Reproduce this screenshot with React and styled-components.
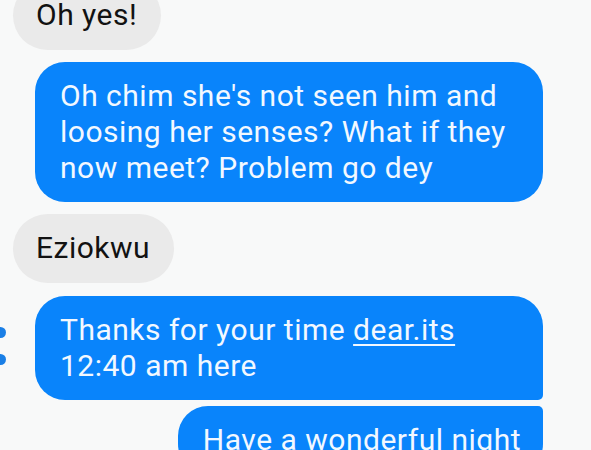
import React from 'react'
import styled, { createGlobalStyle } from 'styled-components'

const GlobalStyle = createGlobalStyle`
  html, body {
    margin: 0;
    padding: 0;
    background: #f8f9f9;
    font-family: Roboto, "Noto Sans", "Liberation Sans", sans-serif;
  }
`

function App() {
  return (
    <>
      <GlobalStyle />
      <Screen>
        <Thread>
          <Row>
            <Bubble>Oh yes!</Bubble>
          </Row>
          <Row $mine>
            <Bubble $mine $wide>
              Oh chim she's not seen him and<br />
              loosing her senses? What if they<br />
              now meet? Problem go dey
            </Bubble>
          </Row>
          <Row>
            <Bubble>Eziokwu</Bubble>
          </Row>
          <Group>
            <Row $mine>
              <Dots>
                <Dot />
                <Dot />
              </Dots>
              <Bubble $mine $wide $corners="30px 30px 5px 30px">
                Thanks for your time <Link>dear.its</Link><br />
                12:40 am here
              </Bubble>
            </Row>
            <Row $mine>
              <Bubble $mine $corners="30px 5px 30px 30px">
                Have a wonderful night
              </Bubble>
            </Row>
          </Group>
        </Thread>
      </Screen>
    </>
  )
}

const Screen = styled.div`
  height: 450px;
  overflow: hidden;
`

const Thread = styled.div`
  display: flex;
  flex-direction: column;
  gap: 12px;
  margin-top: -19px;
  padding: 0 48px 0 13px;
`

const Group = styled.div`
  display: flex;
  flex-direction: column;
  gap: 6px;
  margin-top: 1px;
`

const Row = styled.div`
  position: relative;
  display: flex;
  justify-content: ${p => (p.$mine ? 'flex-end' : 'flex-start')};
`

const Bubble = styled.div`
  box-sizing: border-box;
  ${p => (p.$wide ? 'flex: 1; margin-left: 22px;' : '')}
  padding: ${p => (p.$mine ? '16px 22px 16px 25px' : '16px 24px 17px 23px')};
  border-radius: ${p => p.$corners || (p.$mine ? '30px' : '35px')};
  background: ${p => (p.$mine ? '#0984fb' : '#eaeaea')};
  color: ${p => (p.$mine ? '#f2f8ff' : '#121212')};
  font-size: 30px;
  letter-spacing: 0.5px;
  line-height: 36px;
  white-space: nowrap;
`

const Link = styled.span`
  text-decoration: underline;
  text-decoration-thickness: 2px;
  text-underline-offset: 4px;
`

const Dots = styled.div`
  position: absolute;
  left: -18px;
  top: 31px;
  display: flex;
  flex-direction: column;
  gap: 16px;
`

const Dot = styled.span`
  display: block;
  width: 11px;
  height: 11px;
  border-radius: 50%;
  background: #1a7fe6;
`

export default App
